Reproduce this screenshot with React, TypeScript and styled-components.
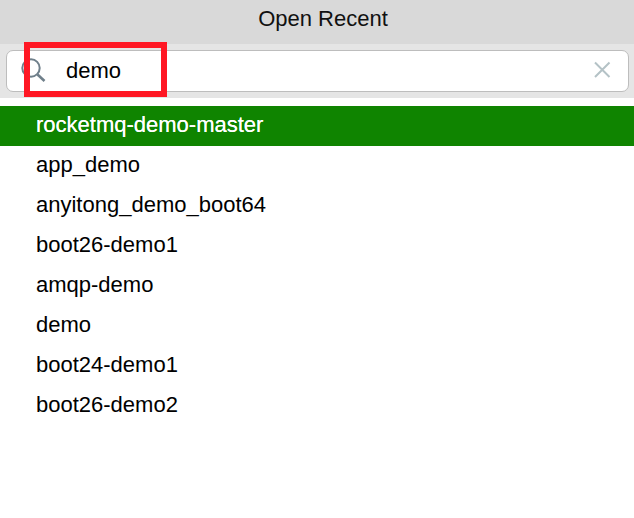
import React from 'react';
import styled, { createGlobalStyle } from 'styled-components';

const GlobalStyle = createGlobalStyle`
  html, body {
    margin: 0;
    padding: 0;
    background: #fff;
    font-family: "Liberation Sans", Arial, sans-serif;
  }
`;

const Page = styled.div`
  width: 634px;
  height: 518px;
  overflow: hidden;
  background: #fff;
  color: #000;
`;

const TitleBar = styled.div`
  height: 44px;
  padding: 0 0 6px 12px;
  box-sizing: border-box;
  background: #d9d9d9;
  display: flex;
  align-items: center;
  justify-content: center;
  font-size: 22px;
  color: #111;
`;

const SearchBand = styled.div`
  position: relative;
  height: 54px;
  padding: 6px 5px 6px 6px;
  box-sizing: border-box;
  background: #e5e5e5;
`;

const SearchBox = styled.div`
  height: 42px;
  box-sizing: border-box;
  padding: 0 17px 0 14px;
  display: flex;
  align-items: center;
  background: #fff;
  border: 1px solid #bdbdbd;
  border-radius: 7px;
`;

const SearchIcon = styled.svg`
  width: 26px;
  height: 26px;
  flex-shrink: 0;
`;

const QueryText = styled.span`
  flex: 1;
  margin-left: 5px;
  padding-left: 14px;
  font-size: 22px;
`;

const ClearIcon = styled.svg`
  width: 18px;
  height: 18px;
  flex-shrink: 0;
  margin-bottom: 2px;
`;

const Highlight = styled.div`
  position: absolute;
  left: 24px;
  top: -2px;
  width: 143px;
  height: 55px;
  box-sizing: border-box;
  border: 6px solid #ff1724;
`;

const ResultList = styled.ul`
  list-style: none;
  margin: 8px 0 0;
  padding: 0;
`;

const ResultRow = styled.li<{ $selected?: boolean }>`
  height: 40px;
  padding: 0 0 3px 36px;
  box-sizing: border-box;
  display: flex;
  align-items: center;
  font-size: 22px;
  background: ${props => (props.$selected ? '#0f8400' : 'transparent')};
  color: ${props => (props.$selected ? '#fff' : '#000')};
  text-shadow: ${props => (props.$selected ? '0 0 0.5px #fff' : 'none')};
`;

const projects = [
  'rocketmq-demo-master',
  'app_demo',
  'anyitong_demo_boot64',
  'boot26-demo1',
  'amqp-demo',
  'demo',
  'boot24-demo1',
  'boot26-demo2',
];

export default function App() {
  return (
    <Page>
      <GlobalStyle />
      <TitleBar>Open Recent</TitleBar>
      <SearchBand>
        <SearchBox>
          <SearchIcon viewBox="0 0 26 26" fill="none" stroke="#6f7f8a">
            <circle cx="10" cy="10" r="8.7" strokeWidth="2" />
            <path d="M16.5 16.5 L23.5 23" strokeWidth="2.6" />
          </SearchIcon>
          <QueryText>demo</QueryText>
          <ClearIcon viewBox="0 0 18 18" fill="none" stroke="#b4c2c6" strokeWidth="2">
            <path d="M2 1.5 L16.5 16 M16.5 1.5 L2 16" />
          </ClearIcon>
        </SearchBox>
        <Highlight />
      </SearchBand>
      <ResultList>
        {projects.map((name, i) => (
          <ResultRow key={name} $selected={i === 0}>{name}</ResultRow>
        ))}
      </ResultList>
    </Page>
  );
}
